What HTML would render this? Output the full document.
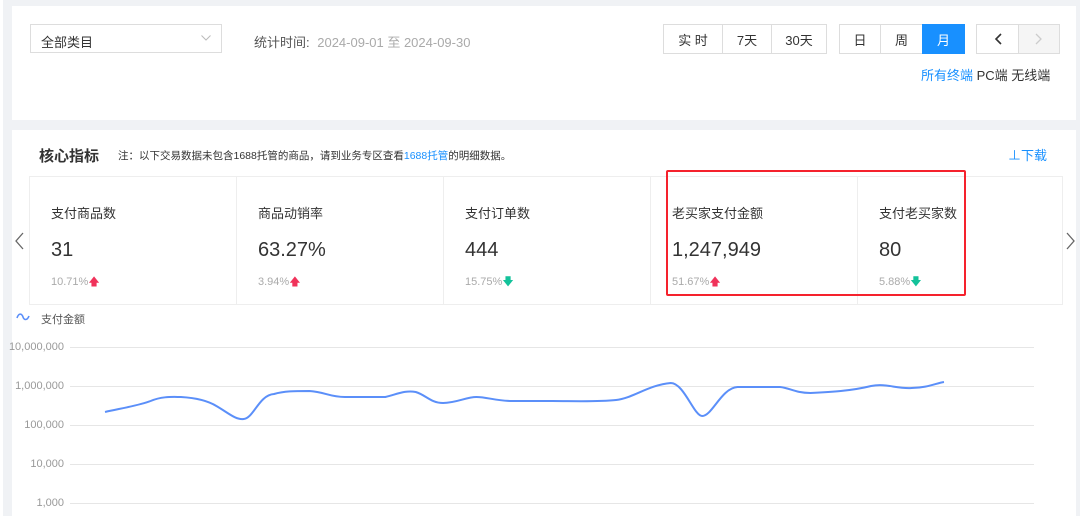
<!DOCTYPE html>
<html><head><meta charset="utf-8"><style>
*{margin:0;padding:0;box-sizing:border-box}
body{width:1080px;height:516px;background:#f0f2f5;font-family:"Liberation Sans","Noto Sans CJK SC",sans-serif;position:relative;overflow:hidden;color:#333}
.a{position:absolute}
.p{background:#fff}
.btn{position:absolute;top:24px;height:30px;border:1px solid #ddd;background:#fff;font-size:13px;color:#333;display:flex;align-items:center;justify-content:center}
.card{position:absolute;top:176px;height:129px;border:1px solid #eee;background:#fff}
.t{position:absolute;left:21px;top:26px;font-size:13px;color:#333}
.v{position:absolute;left:21px;top:62px;font-size:20px;color:#333}
.r{position:absolute;left:21px;top:96px;font-size:11px;color:#aaa}
.up{color:#f0325a}.dn{color:#13c29a}
.yl{position:absolute;right:1016px;font-size:11px;color:#999;text-align:right}
</style></head><body>
<div class="a p" style="left:0;top:0;width:3px;height:516px"></div>
<div class="a p" style="left:12px;top:6px;width:1064px;height:114px"></div>
<div class="a p" style="left:12px;top:130px;width:1064px;height:386px"></div>
<div class="a" style="left:30px;top:24px;width:192px;height:29px;border:1px solid #ddd;background:#fff;font-size:13px;padding:7px 10px">全部类目<svg class="a" style="right:10px;top:10px" width="10" height="6"><path d="M0.5 0.5 L5 5 L9.5 0.5" fill="none" stroke="#bbb"/></svg></div>
<div class="a" style="left:254px;top:32px;font-size:13px;color:#555">统计时间: <span style="color:#aaa;margin-left:4px">2024-09-01 至 2024-09-30</span></div>
<div class="btn" style="left:663px;width:60px">实 时</div>
<div class="btn" style="left:722px;width:50px">7天</div>
<div class="btn" style="left:771px;width:56px">30天</div>
<div class="btn" style="left:839px;width:42px">日</div>
<div class="btn" style="left:880px;width:43px">周</div>
<div class="btn" style="left:922px;width:43px;background:#1890ff;border-color:#1890ff;color:#fff">月</div>
<div class="btn" style="left:976px;width:43px"><svg width="8" height="12"><path d="M7 1 L2 6 L7 11" fill="none" stroke="#333" stroke-width="1.6"/></svg></div>
<div class="btn" style="left:1018px;width:42px;background:#f5f5f5"><svg width="8" height="12"><path d="M1 1 L6 6 L1 11" fill="none" stroke="#ccc" stroke-width="1.3"/></svg></div>
<div class="a" style="left:921px;top:65px;font-size:13px;color:#1890ff">所有终端 <span style="color:#333">PC端 无线端</span></div>
<div class="a" style="left:39px;top:145px;font-size:15px;font-weight:bold;color:#333">核心指标</div>
<div class="a" style="left:118px;top:148px;font-size:10.5px;color:#333">注：以下交易数据未包含1688托管的商品，请到业务专区查看<span style="color:#1890ff">1688托管</span>的明细数据。</div>
<div class="a" style="left:1008px;top:145px;font-size:13px;color:#1890ff">⊥下载</div>
<svg class="a" style="left:14px;top:232px" width="10" height="18"><path d="M9 1 L2 9 L9 17" fill="none" stroke="#666" stroke-width="1.3"/></svg>
<svg class="a" style="left:1066px;top:232px" width="10" height="18"><path d="M1 1 L8 9 L1 17" fill="none" stroke="#666" stroke-width="1.3"/></svg>
<div class="card" style="left:29px;width:208px"><div class="t">支付商品数</div><div class="v">31</div><div class="r">10.71%<span class="up">&#129093;</span></div></div>
<div class="card" style="left:236px;width:208px"><div class="t">商品动销率</div><div class="v">63.27%</div><div class="r">3.94%<span class="up">&#129093;</span></div></div>
<div class="card" style="left:443px;width:208px"><div class="t">支付订单数</div><div class="v">444</div><div class="r">15.75%<span class="dn">&#129095;</span></div></div>
<div class="card" style="left:650px;width:208px"><div class="t">老买家支付金额</div><div class="v">1,247,949</div><div class="r">51.67%<span class="up">&#129093;</span></div></div>
<div class="card" style="left:857px;width:206px"><div class="t">支付老买家数</div><div class="v">80</div><div class="r">5.88%<span class="dn">&#129095;</span></div></div>
<div class="a" style="left:666px;top:170px;width:300px;height:126px;border:2px solid #f5222d;border-radius:2px"></div>
<svg class="a" style="left:16px;top:313px" width="14" height="8"><path d="M1 5 C3 -1 6 1 7 4 C8 7 11 8 13 3" fill="none" stroke="#5b8ff9" stroke-width="1.6"/></svg>
<div class="a" style="left:41px;top:311px;font-size:11px;color:#555">支付金额</div>
<div class="yl" style="top:341px">10,000,000</div>
<div class="yl" style="top:380px">1,000,000</div>
<div class="yl" style="top:419px">100,000</div>
<div class="yl" style="top:458px">10,000</div>
<div class="yl" style="top:497px">1,000</div>
<svg class="a" style="left:0;top:0" width="1080" height="516">
<g stroke="#e6e6e6" stroke-width="1"><line x1="70" y1="347.5" x2="1034" y2="347.5"/><line x1="70" y1="386.5" x2="1034" y2="386.5"/><line x1="70" y1="425.5" x2="1034" y2="425.5"/><line x1="70" y1="464.5" x2="1034" y2="464.5"/><line x1="70" y1="503.5" x2="1034" y2="503.5"/></g>
<path transform="matrix(1.012 0 0 1 0.8 0)" fill="none" stroke="#5b8ff9" stroke-width="2" d="M103 412 C115 409 135 406 148 401 C160 396 170 397 178 397 C195 398 205 401 213 406 C225 413 232 420 240 419 C250 418 255 395 270 394 C280 391 290 391 305 391 C320 392 325 397 340 397 C360 397 370 397 380 397 C392 394 400 390 410 392 C420 395 425 403 437 403 C450 403 460 397 470 397 C480 397 490 401 505 401 C520 401 530 401 545 401 C565 401 590 402 608 400 C625 398 640 385 662 383 C675 383 685 416 693 416 C703 416 712 388 728 387 C740 387 765 387 770 387 C780 388 785 393 800 393 C820 392 840 391 860 386 C875 383 885 389 900 388 C915 388 925 383 932 382"/>
</svg>
</body></html>
